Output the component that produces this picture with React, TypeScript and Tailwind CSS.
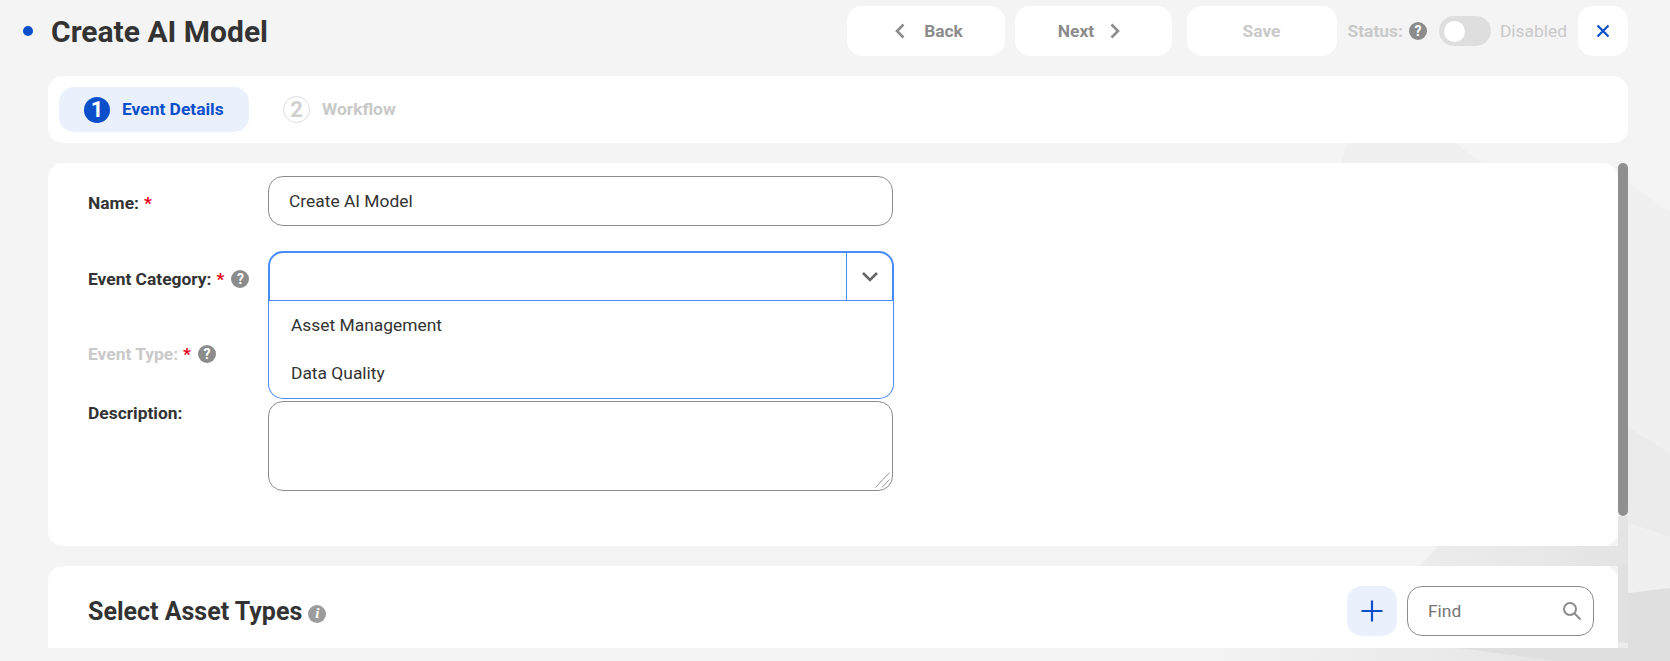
import React from "react";

const Help = ({ className = "" }: { className?: string }) => (
  <span className={`inline-flex h-[18px] w-[18px] shrink-0 items-center justify-center rounded-full bg-[#8c8c8c] text-[14px] font-bold leading-none text-white ${className}`}>?</span>
);

const Star = () => <span className="ml-[5px] font-bold text-[#e60012]">*</span>;

const Background = () => (
  <svg className="absolute inset-0 h-[661px] w-[1670px]" viewBox="0 0 1670 661" aria-hidden="true">
    <defs>
      <linearGradient id="gapFill" x1="1420" y1="0" x2="1628" y2="0" gradientUnits="userSpaceOnUse">
        <stop offset="0" stopColor="#ececec" />
        <stop offset="1" stopColor="#e4e4e4" />
      </linearGradient>
      <linearGradient id="bottomFill" x1="1180" y1="0" x2="1560" y2="0" gradientUnits="userSpaceOnUse">
        <stop offset="0" stopColor="#f4f4f4" />
        <stop offset="1" stopColor="#e5e5e5" />
      </linearGradient>
    </defs>
    <polygon points="1348,143 1341,163 1482,163 1455,143" fill="#f0f0f0" />
    <polygon points="1628,183 1670,212 1670,453 1628,427" fill="#f0f0f0" />
    <polygon points="1628,427 1670,453 1670,537 1628,523" fill="#ebebeb" />
    <polygon points="1628,523 1670,537 1670,588 1628,593" fill="#f0f0f0" />
    <polygon points="1438,546 1420,566 1628,566 1628,516 1618,516 1618,546" fill="url(#gapFill)" />
    <polygon points="1180,648 1457,648 1553,661 1180,661" fill="url(#bottomFill)" />
    <polygon points="1628,593 1670,588 1670,661 1553,661 1457,648 1628,648" fill="#dfdfdf" />
    <polygon points="1618,566 1628,564 1628,648 1618,648" fill="#e1e1e1" />
    <polygon points="1618,642 1628,643 1628,648 1618,648" fill="#ececec" />
  </svg>
);

export default function App() {
  return (
    <div className="relative h-[661px] w-[1670px] overflow-hidden bg-[#f4f4f4] font-['Roboto',sans-serif] text-[17.4px] text-[#333333]">
      <Background />
      <div className="relative">
        <header className="flex h-[76px] items-start pl-[23px] pr-[42px] pt-[6px]">
          <div className="flex h-[50px] items-center">
            <span className="h-[10px] w-[10px] rounded-full bg-[#0c4fcb]" />
            <h1 className="ml-[18px] pt-[1px] text-[30px] font-bold leading-none text-[#333333]">Create AI Model</h1>
          </div>
          <div className="ml-auto flex h-[50px] items-center">
            <button className="flex h-[50px] w-[158px] items-center justify-center gap-[18px] rounded-[15px] bg-white pl-[6px] font-bold text-[#8c8c8c]">
              <svg width="12" height="16" viewBox="0 0 12 16" fill="none" stroke="#8c8c8c" strokeWidth="2.6"><path d="M9.5 1.5 3 8l6.5 6.5" /></svg>
              Back
            </button>
            <button className="ml-[10px] flex h-[50px] w-[157px] items-center justify-center gap-[15px] rounded-[15px] bg-white pr-[7px] font-bold text-[#8c8c8c]">
              Next
              <svg width="12" height="16" viewBox="0 0 12 16" fill="none" stroke="#8c8c8c" strokeWidth="2.6"><path d="M2.5 1.5 9 8l-6.5 6.5" /></svg>
            </button>
            <button className="ml-[15px] h-[50px] w-[150px] rounded-[15px] bg-white font-bold text-[#c9c9c9]">Save</button>
            <span className="ml-[11px] font-bold text-[#c9c9c9]">Status:</span>
            <Help className="ml-[6px]" />
            <span className="ml-[12px] flex h-[30px] w-[52px] items-center rounded-full bg-[#dedede] pl-[5px]">
              <span className="h-[21px] w-[21px] rounded-full bg-white" />
            </span>
            <span className="ml-[9px] text-[#c9c9c9]">Disabled</span>
            <button className="ml-[11px] flex h-[50px] w-[50px] items-center justify-center rounded-[15px] bg-white">
              <svg width="14" height="14" viewBox="0 0 14 14" fill="none" stroke="#0c4fcb" strokeWidth="2.2"><path d="M1.5 1.5l11 11M12.5 1.5l-11 11" /></svg>
            </button>
          </div>
        </header>

        <div className="ml-[48px] w-[1580px]">
          <nav className="flex h-[67px] items-center rounded-[15px] bg-white pl-[11px]">
            <div className="flex h-[45px] w-[190px] items-center rounded-[15px] bg-[#eaf1fd] pl-[25px]">
              <span className="flex h-[26px] w-[26px] items-center justify-center rounded-full bg-[#0c4fcb] text-[22px] font-bold leading-none text-white">1</span>
              <span className="ml-[12px] font-bold text-[#0c4fcb]">Event Details</span>
            </div>
            <div className="ml-[34px] flex items-center">
              <span className="flex h-[27px] w-[27px] items-center justify-center rounded-full border border-[#dddddd] text-[22px] font-bold leading-none text-[#d0d0d0]">2</span>
              <span className="ml-[12px] font-bold text-[#c9c9c9]">Workflow</span>
            </div>
          </nav>

          <div className="mt-[20px] flex h-[485px] items-start overflow-hidden">
            <div className="flex w-[1570px] flex-col gap-[20px]">
              <section className="flex h-[383px] flex-col gap-[25px] rounded-[15px] bg-white pl-[40px] pt-[13px]">
                <div className="flex h-[50px] items-center">
                  <label className="w-[180px] pt-[5px] font-bold">Name:<Star /></label>
                  <input
                    defaultValue="Create AI Model"
                    className="h-[50px] w-[625px] rounded-[15px] border border-[#8c8c8c] bg-white pl-[20px] text-[#333333] outline-none"
                  />
                </div>

                <div className="relative z-10 flex h-[50px] items-center">
                  <label className="flex w-[180px] items-center pt-[6px] font-bold">
                    Event Category:<Star />
                    <Help className="ml-[7px]" />
                  </label>
                  <div className="relative h-[50px] w-[626px]">
                    <div className="flex h-[50px] items-stretch rounded-t-[15px] border-x-2 border-b border-t-2 border-[#4a8cf7] bg-white">
                      <div className="flex-1" />
                      <div className="flex w-[46px] items-center justify-center border-l border-[#4a8cf7]">
                        <svg width="16" height="10" viewBox="0 0 16 10" fill="none" stroke="#666666" strokeWidth="2.6"><path d="M1 1l7 7 7-7" /></svg>
                      </div>
                    </div>
                    <ul className="absolute left-0 top-[50px] h-[98px] w-[626px] rounded-b-[15px] border-x border-b border-[#4a8cf7] bg-white pl-[22px] pt-[2px]">
                      <li className="flex h-[45px] items-center">Asset Management</li>
                      <li className="flex h-[51px] items-center">Data Quality</li>
                    </ul>
                  </div>
                </div>

                <div className="flex h-[50px] items-center">
                  <label className="flex w-[180px] items-center pt-[6px] font-bold text-[#c9c9c9]">
                    Event Type:<Star />
                    <Help className="ml-[7px]" />
                  </label>
                </div>

                <div className="flex items-start">
                  <label className="-mt-[1px] w-[180px] font-bold">Description:</label>
                  <div className="relative h-[90px] w-[625px]">
                    <textarea className="block h-[90px] w-[625px] resize-none rounded-[15px] border border-[#8c8c8c] bg-white outline-none" />
                    <svg className="absolute bottom-[3px] right-[3px]" width="15" height="16" viewBox="0 0 15 16" fill="none" stroke="#9a9a9a" strokeWidth="1"><path d="M0.5 15.5 14.5 0.5M7 15.5 14.5 7.5" /></svg>
                  </div>
                </div>
              </section>

              <section className="flex h-[82px] items-start rounded-t-[15px] bg-white pl-[40px] pr-[24px] pt-[20px]">
                <div className="flex h-[50px] items-center">
                  <h2 className="pt-[1px] text-[25px] font-bold leading-none">Select Asset Types</h2>
                  <span className="ml-[6px] mt-[5px] flex h-[18px] w-[18px] items-center justify-center rounded-full bg-[#9c9c9c] font-['Liberation_Serif',serif] text-[15px] font-bold italic leading-none text-white">i</span>
                </div>
                <button className="ml-auto flex h-[50px] w-[50px] items-center justify-center rounded-[15px] bg-[#eaf1fd]">
                  <svg width="22" height="22" viewBox="0 0 22 22" fill="none" stroke="#0c4fcb" strokeWidth="2.2"><path d="M11 0.5v21M0.5 11h21" /></svg>
                </button>
                <div className="ml-[10px] flex h-[50px] w-[187px] items-center rounded-[15px] border border-[#8c8c8c] bg-white pl-[20px] pr-[11px]">
                  <input placeholder="Find" className="w-[120px] bg-transparent text-[#333333] outline-none placeholder:text-[#757575]" />
                  <svg className="ml-auto" width="20" height="20" viewBox="0 0 20 20" fill="none" stroke="#8c8c8c" strokeWidth="2"><circle cx="8" cy="8" r="6" /><path d="M12.5 12.5 18.5 18.5" /></svg>
                </div>
              </section>
            </div>
            <div className="h-[353px] w-[10px] rounded-full bg-[#8f8f8f]" />
          </div>
        </div>
      </div>
    </div>
  );
}
